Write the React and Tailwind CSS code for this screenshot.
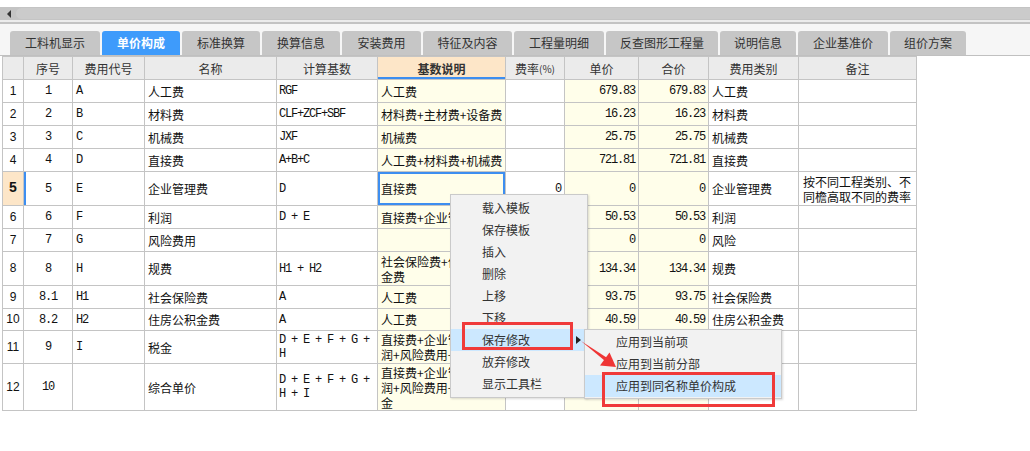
import React from 'react';

const tabs = [
  ['工料机显示', 90],
  ['单价构成', 78],
  ['标准换算', 78],
  ['换算信息', 78],
  ['安装费用', 79],
  ['特征及内容', 89],
  ['工程量明细', 90],
  ['反查图形工程量', 112],
  ['说明信息', 76],
  ['企业基准价', 90],
  ['组价方案', 76],
];

const cols = [21, 49, 72, 132, 101, 128, 59, 74, 70, 90, 118];

const rows = [
  { n: '1', seq: '1', code: 'A', name: '人工费', base: 'RGF', desc: '人工费', rate: '', price: '679.83', total: '679.83', cat: '人工费', note: '', h: 23 },
  { n: '2', seq: '2', code: 'B', name: '材料费', base: 'CLF+ZCF+SBF', desc: '材料费+主材费+设备费', rate: '', price: '16.23', total: '16.23', cat: '材料费', note: '', h: 23 },
  { n: '3', seq: '3', code: 'C', name: '机械费', base: 'JXF', desc: '机械费', rate: '', price: '25.75', total: '25.75', cat: '机械费', note: '', h: 23 },
  { n: '4', seq: '4', code: 'D', name: '直接费', base: 'A+B+C', desc: '人工费+材料费+机械费', rate: '', price: '721.81', total: '721.81', cat: '直接费', note: '', h: 23 },
  { n: '5', seq: '5', code: 'E', name: '企业管理费', base: 'D', desc: '直接费', rate: '0', price: '0', total: '0', cat: '企业管理费', note: '按不同工程类别、不同檐高取不同的费率', h: 34, sel: true },
  { n: '6', seq: '6', code: 'F', name: '利润', base: 'D + E', desc: '直接费+企业管理费', rate: '', price: '50.53', total: '50.53', cat: '利润', note: '', h: 23 },
  { n: '7', seq: '7', code: 'G', name: '风险费用', base: '', desc: '', rate: '', price: '0', total: '0', cat: '风险', note: '', h: 23 },
  { n: '8', seq: '8', code: 'H', name: '规费', base: 'H1 + H2', desc: '社会保险费+住房公积金费', rate: '', price: '134.34', total: '134.34', cat: '规费', note: '', h: 34 },
  { n: '9', seq: '8.1', code: 'H1', name: '社会保险费', base: 'A', desc: '人工费', rate: '', price: '93.75', total: '93.75', cat: '社会保险费', note: '', h: 23 },
  { n: '10', seq: '8.2', code: 'H2', name: '住房公积金费', base: 'A', desc: '人工费', rate: '', price: '40.59', total: '40.59', cat: '住房公积金费', note: '', h: 22 },
  { n: '11', seq: '9', code: 'I', name: '税金', base: 'D + E + F + G + H', desc: '直接费+企业管理费+利润+风险费用+规费', rate: '', price: '31.72', total: '31.72', cat: '税金', note: '', h: 33 },
  { n: '12', seq: '10', code: '', name: '综合单价', base: 'D + E + F + G + H + I', desc: '直接费+企业管理费+利润+风险费用+规费+税金', rate: '', price: '984.19', total: '984.19', cat: '工程造价', note: '', h: 47 },
];

const menu = ['载入模板', '保存模板', '插入', '删除', '上移', '下移', '保存修改', '放弃修改', '显示工具栏'];
const sub = ['应用到当前项', '应用到当前分部', '应用到同名称单价构成'];

const cjk = "font-['Noto_Sans_CJK_SC',sans-serif]";
const mono = "font-['Liberation_Mono','Noto_Sans_CJK_SC',monospace] text-[12px] tracking-[-1.2px] leading-[14px]";
const cell = 'border border-[#c4c4c4] align-middle p-0';

function Cell({ h, className = '', box = '', children }) {
  return (
    <td className={`${cell} ${className}`}>
      <div style={{ height: h - 1 }} className={`flex items-center overflow-hidden ${box}`}>
        {children}
      </div>
    </td>
  );
}

export default function App() {
  return (
    <div className={`w-[1030px] h-[451px] bg-white overflow-hidden relative text-[#111] ${cjk}`}>
      {/* scrollbar */}
      <div className="h-[7px]" />
      <div className="h-[13px] bg-[#c4c4c4] flex items-center">
        <div className="w-[16px] flex justify-center pl-[2px]">
          <div className="w-0 h-0 border-y-[4px] border-y-transparent border-r-[4px] border-r-[#333]" />
        </div>
        <div className="flex-1 h-[11px] rounded-l-full bg-[#cbcbcb]" />
      </div>
      <div className="h-[2px] bg-[#ececec]" />
      <div className="h-[2px] bg-[#c3c3c3]" />

      {/* tabs */}
      <div className="h-[32px] bg-[#f6f6f6] border-b border-[#c0c0c0] flex items-end gap-[2px] pl-[10px]">
        {tabs.map(([t, w], i) => (
          <div
            key={t}
            style={{ width: w }}
            className={`h-[24px] rounded-t-[3px] flex items-center justify-center text-[12px] ${
              i === 1 ? 'bg-[#3e9bfb] text-white font-bold' : 'bg-[#c6c6c6] text-[#333]'
            }`}
          >
            {t}
          </div>
        ))}
      </div>

      {/* grid */}
      <div className="pl-[2px]">
        <table className="table-fixed border-collapse w-[914px] text-[12px] leading-[15px]">
          <colgroup>
            {cols.map((w, i) => (
              <col key={i} style={{ width: w }} />
            ))}
          </colgroup>
          <thead>
            <tr className="bg-[#ebebeb] text-[#333]">
              <Cell h={23} />
              <Cell h={23} box="justify-center">序号</Cell>
              <Cell h={23} box="justify-center">费用代号</Cell>
              <Cell h={23} box="justify-center">名称</Cell>
              <Cell h={23} box="justify-center">计算基数</Cell>
              <Cell h={23} className="bg-[#fde6c8]" box="justify-center font-bold shadow-[inset_0_-2px_0_#3d8ef0]">基数说明</Cell>
              <Cell h={23} box="justify-center">
                费率<span className="text-[10px]">(%)</span>
              </Cell>
              <Cell h={23} box="justify-center">单价</Cell>
              <Cell h={23} box="justify-center">合价</Cell>
              <Cell h={23} box="justify-center">费用类别</Cell>
              <Cell h={23} box="justify-center">备注</Cell>
            </tr>
          </thead>
          <tbody>
            {rows.map((r) => (
              <tr key={r.n}>
                <Cell
                  h={r.h}
                  className={r.sel ? 'bg-[#fde6c8]' : ''}
                  box={`justify-center ${r.sel ? "font-bold text-[14px] font-['Liberation_Mono',monospace]" : "font-['Liberation_Sans',sans-serif] text-[12px]"}`}
                >
                  {r.n}
                </Cell>
                <Cell h={r.h} box={`justify-center ${mono} ${r.sel ? 'shadow-[inset_2px_0_0_#3d8ef0]' : ''}`}>{r.seq}</Cell>
                <Cell h={r.h} box={`px-[3px] ${mono}`}>{r.code}</Cell>
                <Cell h={r.h} box="px-[3px]">{r.name}</Cell>
                <Cell h={r.h} box={`pl-[2px] pr-[1px] ${mono}`}>{r.base}</Cell>
                <Cell
                  h={r.h}
                  className="bg-[#fffeea]"
                  box={`pl-[3px] pr-[1px] break-all ${r.sel ? 'shadow-[inset_0_0_0_2px_#3d8ef0]' : ''}`}
                >
                  {r.desc}
                </Cell>
                <Cell h={r.h} box={`justify-end pr-[3px] ${mono}`}>{r.rate}</Cell>
                <Cell h={r.h} className="bg-[#fffeea]" box={`justify-end pr-[3px] ${mono}`}>{r.price}</Cell>
                <Cell h={r.h} className="bg-[#fffeea]" box={`justify-end pr-[3px] ${mono}`}>{r.total}</Cell>
                <Cell h={r.h} box="px-[3px] whitespace-nowrap">{r.cat}</Cell>
                <Cell h={r.h} box="pl-[4px] pr-[1px]">{r.note}</Cell>
              </tr>
            ))}
          </tbody>
        </table>
      </div>

      {/* context menu */}
      <div className="absolute left-[450px] top-[194px] w-[138px] py-[2px] bg-[#f2f2f2] border border-[#cacaca] shadow-[1px_1px_2px_rgba(0,0,0,0.15)] text-[12px] text-[#333]">
        {menu.map((m) => (
          <div key={m} className={`h-[22px] flex items-center pl-[31px] relative ${m === '保存修改' ? 'bg-[#cce8ff]' : ''}`}>
            {m}
            {m === '保存修改' && (
              <div className="absolute right-[6px] w-0 h-0 border-y-[4px] border-y-transparent border-l-[5px] border-l-[#222]" />
            )}
          </div>
        ))}
      </div>

      {/* submenu */}
      <div className="absolute left-[584px] top-[329px] w-[198px] py-[1px] bg-[#f2f2f2] border border-[#cacaca] shadow-[1px_1px_2px_rgba(0,0,0,0.15)] text-[12px] text-[#333]">
        {sub.map((m, i) => (
          <div key={m} className={`h-[22px] flex items-center pl-[31px] ${i === 2 ? 'bg-[#cce8ff]' : ''}`}>
            {m}
          </div>
        ))}
      </div>

      {/* red highlights */}
      <div className="absolute left-[462px] top-[322px] w-[111px] h-[28px] border-[3px] border-[#f03a3a]" />
      <div className="absolute left-[602px] top-[372px] w-[173px] h-[35px] border-[3px] border-[#f03a3a]" />
      <svg className="absolute left-[576px] top-[336px]" width="46" height="36" viewBox="0 0 46 36">
        <path d="M5 5 L30.5 21.5 L28.5 24.5 Z" fill="#ef3535" />
        <path d="M40 31 L24 29.5 L33.5 16.5 Z" fill="#ef3535" />
      </svg>
    </div>
  );
}
